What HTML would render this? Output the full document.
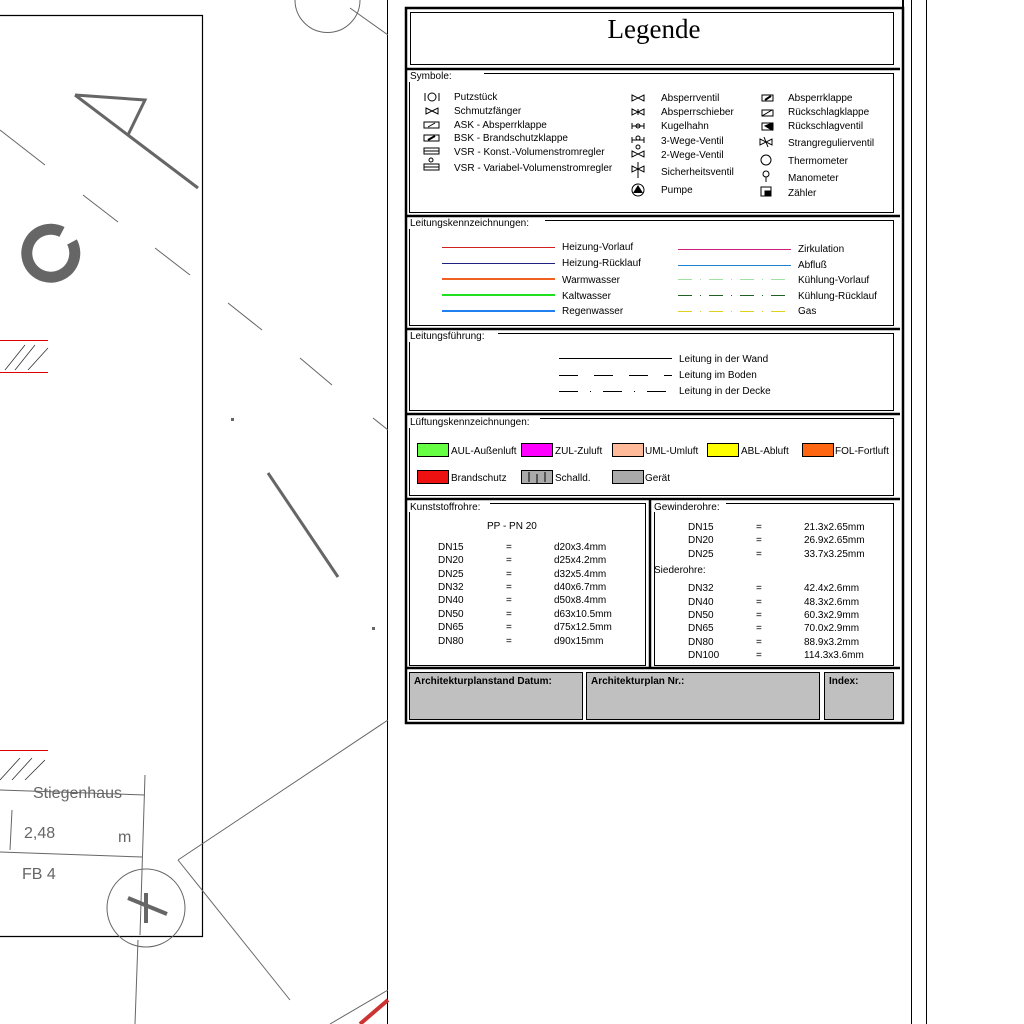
<!DOCTYPE html>
<html><head><meta charset="utf-8"><style>
html,body{margin:0;padding:0;background:#fff}
svg{display:block}
text{font-family:"Liberation Sans",sans-serif;font-size:10px;fill:#000}
</style></head><body>
<svg width="1024" height="1024" viewBox="0 0 1024 1024" xmlns="http://www.w3.org/2000/svg">
<g fill="none" stroke="#000">
<path d="M0 15.5H202.5V936.5H0" stroke-width="1.2"/>
<path d="M387.5 0V1024" stroke-width="1"/>
<path d="M911.5 0V1024M926.5 0V1024" stroke-width="1"/>
</g>
<g fill="none" stroke="#666">
<path d="M75 95L145 100L128 135" stroke-width="3"/>
<path d="M75 95L198 188" stroke-width="3"/>
<path d="M268 473L338 577" stroke-width="3"/>
<path d="M62 232A24 24 0 1 0 72 242" stroke-width="11"/>
<path d="M0 130L45 165M83 195L118 222M155 248L190 275M228 303L262 330M300 358L332 385M373 418L388 430" stroke-width="1"/>
<circle cx="146" cy="908" r="39" stroke-width="1"/>
<path d="M128 898L167 914M146 893V923" stroke-width="4"/>
<path d="M178 860L388 720M178 860L290 1000M138 940L135 1024M145 775L140 935" stroke-width="1"/>
<path d="M0 790L145 795M0 852L142 857M12 810L10 850" stroke-width="1"/>
<path d="M295 0A30 30 0 0 0 360 0" stroke-width="1"/>
<path d="M350 8L388 35" stroke-width="1"/>
<path d="M330 1024L388 990" stroke-width="1"/>
</g>
<rect x="231" y="418" width="3" height="3" fill="#666"/>
<rect x="372" y="627" width="3" height="3" fill="#666"/>
<g stroke="#d00" stroke-width="1"><path d="M0 340.5H48M0 372.5H48M0 750.5H48"/></g>
<g stroke="#333" stroke-width="0.8"><path d="M5 370L25 345M15 370L35 345M28 370L48 348M0 780L20 758M12 780L32 758M25 780L45 760"/></g>
<text x="33" y="798" style="font-size:16px;fill:#666">Stiegenhaus</text>
<text x="24" y="838" style="font-size:16px;fill:#666">2,48</text>
<text x="118" y="842" style="font-size:16px;fill:#666">m</text>
<text x="22" y="879" style="font-size:16px;fill:#666">FB 4</text>
<path d="M360 1024L388 1000" stroke="#c33" stroke-width="4"/>

<g fill="none" stroke="#000">
<path d="M406 8H903V723H406Z" stroke-width="2.5"/>
<path d="M903 0V723" stroke-width="2"/>
<rect x="410.5" y="12.5" width="483" height="52"/>
<path d="M406 69H900M406 216H900M406 329H900M406 414H900M406 499H900M406 668H900" stroke-width="2.5"/>
<path d="M650 499V667" stroke-width="2.5"/>
<path d="M409.5 82V212.5H893.5V73.5H484" />
<path d="M409.5 229V325.5H893.5V220.5H545" />
<path d="M409.5 342V410.5H893.5V333.5H498" />
<path d="M409.5 428V495.5H893.5V418.5H540" />
<path d="M409.5 512V665.5H645.5V503.5H490" />
<path d="M654.5 512V665.5H893.5V503.5H726" />
</g>
<text x="654" y="38" text-anchor="middle" style="font-family:'Liberation Serif',serif;font-size:27px">Legende</text>
<text x="410" y="79">Symbole:</text>
<text x="410" y="226">Leitungskennzeichnungen:</text>
<text x="410" y="339">Leitungsführung:</text>
<text x="410" y="425">Lüftungskennzeichnungen:</text>
<text x="410" y="510">Kunststoffrohre:</text>
<text x="654" y="510">Gewinderohre:</text>
<text x="654" y="573">Siederohre:</text>

<g fill="none" stroke="#000" stroke-width="1">
<circle cx="432" cy="97" r="4"/><path d="M425 93V101M439 93V101"/>
<path d="M426 108L438 114V108L426 114Z"/>
<rect x="424" y="122" width="15" height="6"/><path d="M428 127L435 123"/>
<rect x="424" y="135" width="15" height="6"/><path d="M428 140L435 136" stroke-width="2"/>
<rect x="424" y="148" width="15" height="6"/><path d="M424 151H439"/>
<rect x="424" y="164" width="15" height="6"/><path d="M424 167H439"/><circle cx="431" cy="160" r="2"/>
<path d="M632 95L644 101V95L632 101Z"/>
<path d="M632 109L644 115V109L632 115ZM638 109V115"/>
<path d="M632 123V129M644 123V129M632 126H644"/><circle cx="638" cy="126" r="2"/>
<path d="M632 137V143M644 137V143M632 140H644"/><circle cx="638" cy="138" r="2"/>
<path d="M632 151L644 157V151L632 157Z"/><circle cx="638" cy="147" r="2"/>
<path d="M632 166L644 172V166L632 172ZM638 162V178"/>
<path d="M762 95H773V101H762Z"/><path d="M765 100L771 96" stroke-width="2"/>
<path d="M762 110H773V116H762Z"/><path d="M762 116L772 110"/>
<path d="M762 123H773V130H762Z"/><path d="M765 126L772 123V130Z" fill="#000"/>
<path d="M760 139L772 145V139L760 145ZM764 137L768 147"/>
<circle cx="766" cy="160" r="5"/>
<circle cx="766" cy="174" r="3"/><path d="M766 177V182"/>
<rect x="761" y="187" width="10" height="9"/><rect x="765" y="191" width="6" height="5" fill="#000"/>
</g>
<circle cx="638" cy="190" r="6" fill="none" stroke="#000"/><path d="M633 193L638 185L643 193Z"/>
<g>
<text x="454" y="100">Putzstück</text>
<text x="454" y="114">Schmutzfänger</text>
<text x="454" y="128">ASK  - Absperrklappe</text>
<text x="454" y="141">BSK  - Brandschutzklappe</text>
<text x="454" y="155">VSR  - Konst.-Volumenstromregler</text>
<text x="454" y="171">VSR  - Variabel-Volumenstromregler</text>
<text x="661" y="101">Absperrventil</text>
<text x="661" y="115">Absperrschieber</text>
<text x="661" y="129">Kugelhahn</text>
<text x="661" y="144">3-Wege-Ventil</text>
<text x="661" y="158">2-Wege-Ventil</text>
<text x="661" y="175">Sicherheitsventil</text>
<text x="661" y="193">Pumpe</text>
<text x="788" y="101">Absperrklappe</text>
<text x="788" y="115">Rückschlagklappe</text>
<text x="788" y="129">Rückschlagventil</text>
<text x="788" y="146">Strangregulierventil</text>
<text x="788" y="164">Thermometer</text>
<text x="788" y="181">Manometer</text>
<text x="788" y="196">Zähler</text>
</g>

<g fill="none">
<rect x="442" y="247" width="113" height="1" fill="#d02020"/>
<rect x="442" y="263" width="113" height="1" fill="#202080"/>
<path d="M442 279H555" stroke="#f06020" stroke-width="2"/>
<path d="M442 295H555" stroke="#20e020" stroke-width="2"/>
<path d="M442 311H555" stroke="#2080f0" stroke-width="2"/>
<rect x="678" y="249" width="113" height="1" fill="#d02080"/>
<rect x="678" y="265" width="113" height="1" fill="#2080d0"/>
<path d="M678 279.5H791" stroke="#a0e0a0" stroke-dasharray="14 8 1 8"/>
<path d="M678 295.5H791" stroke="#206020" stroke-dasharray="14 8 1 8"/>
<path d="M678 311.5H791" stroke="#e0d020" stroke-dasharray="14 8 1 8"/>
<path d="M559 358.5H672" stroke="#000"/>
<path d="M559 375.5H672" stroke="#000" stroke-dasharray="19 16"/>
<path d="M559 391.5H672" stroke="#000" stroke-dasharray="19 12 1 12"/>
</g>
<text x="562" y="250">Heizung-Vorlauf</text>
<text x="562" y="266">Heizung-Rücklauf</text>
<text x="562" y="283">Warmwasser</text>
<text x="562" y="299">Kaltwasser</text>
<text x="562" y="314">Regenwasser</text>
<text x="798" y="252">Zirkulation</text>
<text x="798" y="268">Abfluß</text>
<text x="798" y="283">Kühlung-Vorlauf</text>
<text x="798" y="299">Kühlung-Rücklauf</text>
<text x="798" y="314">Gas</text>
<text x="679" y="362">Leitung in der Wand</text>
<text x="679" y="378">Leitung im Boden</text>
<text x="679" y="394">Leitung in der Decke</text>

<g stroke="#000" stroke-width="1">
<rect x="417.5" y="443.5" width="31" height="13" fill="#66ff44"/>
<rect x="521.5" y="443.5" width="31" height="13" fill="#ff00ff"/>
<rect x="612.5" y="443.5" width="31" height="13" fill="#ffbb99"/>
<rect x="707.5" y="443.5" width="31" height="13" fill="#ffff00"/>
<rect x="802.5" y="443.5" width="31" height="13" fill="#ff6611"/>
<rect x="417.5" y="470.5" width="31" height="13" fill="#ee1111"/>
<rect x="521.5" y="470.5" width="31" height="13" fill="#aaaaaa"/>
<rect x="612.5" y="470.5" width="31" height="13" fill="#aaaaaa"/>
<path d="M529 472V482M537 474V484M545 472V482"/>
</g>
<text x="451" y="454">AUL-Außenluft</text>
<text x="555" y="454">ZUL-Zuluft</text>
<text x="645" y="454">UML-Umluft</text>
<text x="741" y="454">ABL-Abluft</text>
<text x="835" y="454">FOL-Fortluft</text>
<text x="451" y="481">Brandschutz</text>
<text x="555" y="481">Schalld.</text>
<text x="645" y="481">Gerät</text>

<text x="487" y="529">PP  -  PN 20</text>
<g>
<text x="438" y="550">DN15</text><text x="506" y="550">=</text><text x="554" y="550">d20x3.4mm</text>
<text x="438" y="563">DN20</text><text x="506" y="563">=</text><text x="554" y="563">d25x4.2mm</text>
<text x="438" y="577">DN25</text><text x="506" y="577">=</text><text x="554" y="577">d32x5.4mm</text>
<text x="438" y="590">DN32</text><text x="506" y="590">=</text><text x="554" y="590">d40x6.7mm</text>
<text x="438" y="603">DN40</text><text x="506" y="603">=</text><text x="554" y="603">d50x8.4mm</text>
<text x="438" y="617">DN50</text><text x="506" y="617">=</text><text x="554" y="617">d63x10.5mm</text>
<text x="438" y="630">DN65</text><text x="506" y="630">=</text><text x="554" y="630">d75x12.5mm</text>
<text x="438" y="644">DN80</text><text x="506" y="644">=</text><text x="554" y="644">d90x15mm</text>
<text x="688" y="530">DN15</text><text x="756" y="530">=</text><text x="804" y="530">21.3x2.65mm</text>
<text x="688" y="543">DN20</text><text x="756" y="543">=</text><text x="804" y="543">26.9x2.65mm</text>
<text x="688" y="557">DN25</text><text x="756" y="557">=</text><text x="804" y="557">33.7x3.25mm</text>
<text x="688" y="591">DN32</text><text x="756" y="591">=</text><text x="804" y="591">42.4x2.6mm</text>
<text x="688" y="605">DN40</text><text x="756" y="605">=</text><text x="804" y="605">48.3x2.6mm</text>
<text x="688" y="618">DN50</text><text x="756" y="618">=</text><text x="804" y="618">60.3x2.9mm</text>
<text x="688" y="631">DN65</text><text x="756" y="631">=</text><text x="804" y="631">70.0x2.9mm</text>
<text x="688" y="645">DN80</text><text x="756" y="645">=</text><text x="804" y="645">88.9x3.2mm</text>
<text x="688" y="658">DN100</text><text x="756" y="658">=</text><text x="804" y="658">114.3x3.6mm</text>
</g>

<g fill="#c0c0c0" stroke="#000">
<rect x="409.5" y="672.5" width="173" height="47"/>
<rect x="586.5" y="672.5" width="233" height="47"/>
<rect x="824.5" y="672.5" width="69" height="47"/>
</g>
<text x="414" y="684" style="font-weight:bold">Architekturplanstand Datum:</text>
<text x="591" y="684" style="font-weight:bold">Architekturplan Nr.:</text>
<text x="829" y="684" style="font-weight:bold">Index:</text>
</svg>
</body></html>
